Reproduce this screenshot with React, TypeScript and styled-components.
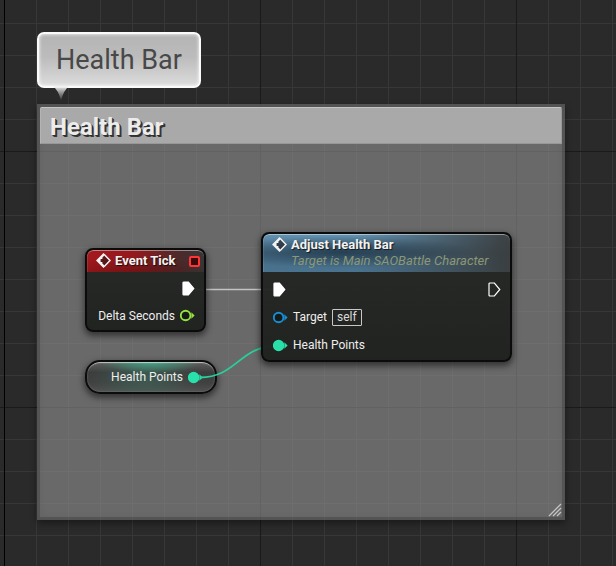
import React from "react";
import styled, { createGlobalStyle, css } from "styled-components";

const GlobalStyle = createGlobalStyle`
  *, *::before, *::after { box-sizing: border-box; }
  body {
    margin: 0;
    background: #2a2a2a;
    font-family: Roboto, "Liberation Sans", sans-serif;
    color: #f0f0f0;
  }
`;

const Canvas = styled.main`
  position: relative;
  min-height: 100vh;
  overflow: hidden;
  background-color: #2a2a2a;
  background-image:
    linear-gradient(90deg, #000 1px, transparent 1px),
    linear-gradient(90deg, #1a1a1a 1px, transparent 1px),
    linear-gradient(#1a1a1a 1px, transparent 1px),
    linear-gradient(90deg, #373737 1px, transparent 1px),
    linear-gradient(#373737 1px, transparent 1px);
  background-size: 2048px 100%, 256px 256px, 256px 256px, 32px 32px, 32px 32px;
  background-position: 4px 0, 4px 151px, 4px 151px, 4px 23px, 4px 23px;
`;

/* Items on the graph are placed by their graph coordinates. */
const Placed = styled.div<{ $x: number; $y: number }>`
  position: absolute;
  left: ${(p) => p.$x}px;
  top: ${(p) => p.$y}px;
`;

const Bubble = styled(Placed)`
  padding: 8px 17px;
  border: 2px solid #fafafa;
  border-radius: 7px;
  background: linear-gradient(#b4b4b4, #bcbcbc 45%, #dcdcdc);
  box-shadow: inset 0 0 3px 1px rgba(255, 255, 255, 0.6);
  color: #484848;
  font-size: 27px;
  line-height: 36px;
  white-space: nowrap;
`;

const BubbleTail = styled.svg`
  position: absolute;
  left: 14px;
  top: 100%;
`;

const CommentBox = styled(Placed)`
  display: flex;
  flex-direction: column;
  width: 528px;
  height: 416px;
  padding: 3px;
  background: rgba(153, 153, 153, 0.57);
  box-shadow:
    inset 0 0 0 3px rgba(40, 40, 40, 0.26),
    inset 0 0 9px rgba(40, 40, 40, 0.18),
    0 3px 7px rgba(0, 0, 0, 0.4);
`;

const CommentTitle = styled.h1`
  margin: 0;
  padding: 4px 9px 0;
  border: 1px solid #989898;
  border-top-color: #c4c4c4;
  border-left-color: #b4b4b4;
  border-radius: 2px 2px 0 0;
  background: #a9a9a9;
  color: #ececec;
  font-size: 24px;
  line-height: 31px;
  font-weight: 700;
  text-shadow: 1px 1px 0 #303030, 2px 2px 0 #383838;
`;

const ResizeGrip = styled.svg`
  margin: auto 0 0 auto;
`;

const Wires = styled.svg`
  position: absolute;
  left: 0;
  top: 0;
  pointer-events: none;
`;

const Node = styled(Placed)<{ $w: number }>`
  width: ${(p) => p.$w}px;
  border: 2px solid #0b0b0b;
  border-radius: 8px;
  background: linear-gradient(rgba(37, 39, 37, 0.95), rgba(31, 33, 31, 0.97));
  box-shadow: 0 3px 6px 1px rgba(0, 0, 0, 0.5);
  overflow: hidden;
`;

const headerTones = {
  event: css`
    background:
      radial-gradient(ellipse 90px 20px at 48px 26px, rgba(70, 8, 8, 0.5), transparent),
      linear-gradient(90deg, #a3191e 0%, #94191d 40%, #4d292a 78%, #393636 100%);
  `,
  call: css`
    background:
      radial-gradient(ellipse 130px 16px at 80px 18px, rgba(18, 32, 44, 0.6), transparent),
      linear-gradient(90deg, transparent 38%, rgba(57, 59, 59, 0.9) 98%),
      linear-gradient(#6493b2, #456c87 50%, #4a738f);
  `,
};

const NodeHeader = styled.header<{ $tone: keyof typeof headerTones }>`
  display: flex;
  align-items: flex-start;
  gap: 4px;
  padding: 2px 4px 3px 9px;
  border-radius: 6px 6px 0 0;
  box-shadow: inset 0 1px 0 rgba(255, 255, 255, 0.45), inset 1px 0 0 rgba(255, 255, 255, 0.1);
  ${(p) => headerTones[p.$tone]}
`;

const HeaderIcon = styled.svg`
  flex: none;
  margin-top: 1px;
`;

const NodeTitle = styled.h2`
  margin: 0;
  color: #f2f2f2;
  font-size: 13px;
  line-height: 17px;
  font-weight: 700;
  white-space: nowrap;
  text-shadow: 1px 1px 1px rgba(0, 0, 0, 0.7);
`;

const NodeSubtitle = styled.p`
  margin: 0;
  color: #8b9777;
  font-size: 13px;
  line-height: 16px;
  font-style: italic;
  white-space: nowrap;
`;

const DelegatePin = styled.span`
  width: 11px;
  height: 11px;
  margin: 4px 0 0 auto;
  border: 2px solid #ff3434;
  border-radius: 2px;
  background: #3a0a0c;
`;

const PinRows = styled.div`
  display: flex;
  flex-direction: column;
  padding: 3px 9px 1px 10px;
`;

const PinRow = styled.div<{ $align?: "start" | "end" | "between"; $compact?: boolean }>`
  display: flex;
  align-items: center;
  justify-content: ${(p) =>
    p.$align === "end" ? "flex-end" : p.$align === "between" ? "space-between" : "flex-start"};
  gap: 5px;
  height: ${(p) => (p.$compact ? 27 : 28)}px;
  font-size: 12px;
  line-height: 16px;
  white-space: nowrap;
`;

const PinLabel = styled.span`
  color: #eeeeee;
  font-size: 12px;
`;

const SelfValue = styled.span`
  padding: 0 4px;
  border: 1px solid #c8c8c8;
  border-radius: 1px;
  color: #dadada;
  line-height: 15px;
`;

const VariableNode = styled(Placed)`
  display: flex;
  align-items: center;
  justify-content: flex-end;
  gap: 5px;
  width: 132px;
  height: 34px;
  padding: 0 12px 0 0;
  border: 2px solid #0c0c0c;
  border-radius: 15px;
  background:
    radial-gradient(ellipse 50px 11px at 50% 0, rgba(66, 170, 138, 0.85), transparent),
    radial-gradient(ellipse 55px 30px at 45% 50%, rgba(60, 110, 92, 0.6), transparent),
    linear-gradient(#606060, #3c3c3c 35%, #414141 70%, #505050);
  box-shadow:
    inset 0 2px 1px -1px rgba(255, 255, 255, 0.6),
    inset 0 0 2px rgba(255, 255, 255, 0.3),
    0 3px 6px 1px rgba(0, 0, 0, 0.5);
`;

function EventIcon() {
  return (
    <HeaderIcon width="15" height="15" viewBox="0 0 15 15" aria-hidden="true">
      <path d="M7.5 1 14 7.5 7.5 14 1 7.5Z" fill="#20181a" fillOpacity=".55" />
      <path d="M8 1.2 14 7.5 8 13.8" fill="none" stroke="#f2f2f2" strokeWidth="1.5" />
      <path d="M0 7.5 7.5 0 8.2 .8V2.8L6.4 4.6V6H4.6V9H6.4V10.4L8.2 12.2V14.2L7.5 15Z" fill="#f2f2f2" />
    </HeaderIcon>
  );
}

function ExecPin({ filled = false }: { filled?: boolean }) {
  return (
    <svg width="13" height="15" viewBox="0 0 13 15" aria-hidden="true">
      <path
        d="M1 2Q1 1 2 1H6.4L11.8 7.5 6.4 14H2Q1 14 1 13Z"
        fill={filled ? "#fff" : "none"}
        stroke="#fff"
        strokeWidth="1.2"
      />
    </svg>
  );
}

function DataPin({ color, filled = false }: { color: string; filled?: boolean }) {
  return (
    <svg width="15" height="13" viewBox="0 0 15 13" aria-hidden="true">
      <path d="M11.4 3.2 14.6 6.5 11.4 9.8Z" fill={color} />
      <circle cx="5.6" cy="6.5" r="4.8" fill={filled ? color : "#171b18"} stroke={color} strokeWidth="1.9" />
    </svg>
  );
}

export default function App() {
  return (
    <>
      <GlobalStyle />
      <Canvas>
        <CommentBox as="section" $x={37} $y={104}>
          <CommentTitle>Health Bar</CommentTitle>
          <ResizeGrip width="14" height="14" viewBox="0 0 14 14" aria-hidden="true">
            <path d="M1 13 13 1M5 13 13 5M9 13 13 9" stroke="#c4c4c4" strokeWidth="1.3" />
          </ResizeGrip>
        </CommentBox>

        <Bubble $x={37} $y={32}>
          Health Bar
          <BubbleTail width="18" height="15" viewBox="0 0 18 15" aria-hidden="true">
            <defs>
              <linearGradient id="tail" x1="0" y1="0" x2="0" y2="1">
                <stop offset="0" stopColor="#f4f4f4" />
                <stop offset="1" stopColor="#aaaaaa" stopOpacity="0.2" />
              </linearGradient>
            </defs>
            <path d="M0 0H16Q11 4 8 14Q5 4 0 0Z" fill="url(#tail)" />
          </BubbleTail>
        </Bubble>

        <VariableNode as="article" $x={85} $y={360}>
          <PinLabel>Health Points</PinLabel>
          <DataPin color="#29e0aa" filled />
        </VariableNode>

        <Wires width="616" height="566" aria-hidden="true">
          <path d="M194 289.5H274" stroke="#c4c4c4" strokeWidth="1.5" fill="none" />
          <path d="M200 377.5C236 377.5 240 346.5 274 346.5" stroke="#29cf9d" strokeWidth="1.8" fill="none" />
        </Wires>

        <Node as="article" $x={85} $y={248} $w={121}>
          <NodeHeader $tone="event">
            <EventIcon />
            <NodeTitle>Event Tick</NodeTitle>
            <DelegatePin />
          </NodeHeader>
          <PinRows>
            <PinRow $align="end" $compact>
              <ExecPin filled />
            </PinRow>
            <PinRow $align="end" $compact>
              <PinLabel>Delta Seconds</PinLabel>
              <DataPin color="#93e23d" />
            </PinRow>
          </PinRows>
        </Node>

        <Node as="article" $x={261} $y={232} $w={251}>
          <NodeHeader $tone="call">
            <EventIcon />
            <div>
              <NodeTitle>Adjust Health Bar</NodeTitle>
              <NodeSubtitle>Target is Main SAOBattle Character</NodeSubtitle>
            </div>
          </NodeHeader>
          <PinRows>
            <PinRow $align="between">
              <ExecPin filled />
              <ExecPin />
            </PinRow>
            <PinRow>
              <DataPin color="#168fd6" />
              <PinLabel>Target</PinLabel>
              <SelfValue>self</SelfValue>
            </PinRow>
            <PinRow>
              <DataPin color="#29e0aa" filled />
              <PinLabel>Health Points</PinLabel>
            </PinRow>
          </PinRows>
        </Node>
      </Canvas>
    </>
  );
}
